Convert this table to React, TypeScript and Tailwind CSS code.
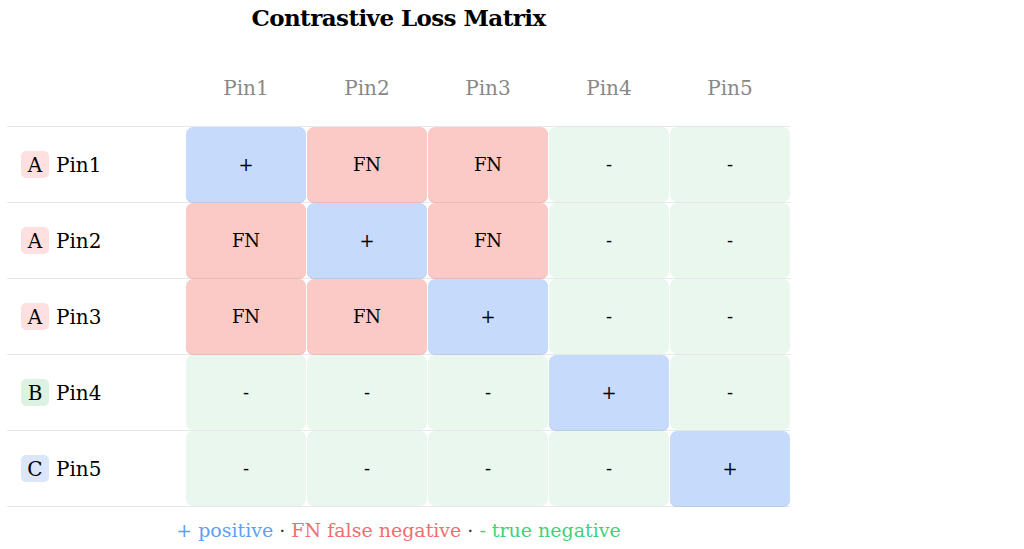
const cols = ['Pin1', 'Pin2', 'Pin3', 'Pin4', 'Pin5']

type Kind = 'pos' | 'fn' | 'neg'

const rows: { group: string; name: string; cells: Kind[] }[] = [
  { group: 'A', name: 'Pin1', cells: ['pos', 'fn', 'fn', 'neg', 'neg'] },
  { group: 'A', name: 'Pin2', cells: ['fn', 'pos', 'fn', 'neg', 'neg'] },
  { group: 'A', name: 'Pin3', cells: ['fn', 'fn', 'pos', 'neg', 'neg'] },
  { group: 'B', name: 'Pin4', cells: ['neg', 'neg', 'neg', 'pos', 'neg'] },
  { group: 'C', name: 'Pin5', cells: ['neg', 'neg', 'neg', 'neg', 'pos'] },
]

const badgeColor: Record<string, string> = {
  A: 'bg-[#fde0df]',
  B: 'bg-[#dcf3e3]',
  C: 'bg-[#dbe6fb]',
}

const cellStyle: Record<Kind, string> = {
  pos: 'bg-[#c6dafc] rounded-[7px] shadow-[0_1px_0_#b9cbe9]',
  fn: 'bg-[#fbc9c6] rounded-[7px] shadow-[0_1px_0_#ecbab7]',
  neg: 'bg-[#eaf7ee] rounded-[7px]',
}

const cellText: Record<Kind, string> = { pos: '+', fn: 'FN', neg: '-' }

export default function App() {
  return (
    <div className="w-[783px] ml-[7px] font-['DejaVu_Serif',serif] text-black">
      <div className="h-[37px] flex items-center justify-center">
        <h1 className="text-[23px] font-bold tracking-tight">Contrastive Loss Matrix</h1>
      </div>

      <div className="grid grid-cols-[178px_repeat(5,120px)] gap-x-px h-[90px] items-center pt-[12px] border-b border-[#e5e7eb]">
        <div />
        {cols.map((c) => (
          <div key={c} className="text-center text-[20px] text-[#888888]">{c}</div>
        ))}
      </div>

      {rows.map((r) => (
        <div key={r.name} className="grid grid-cols-[178px_repeat(5,120px)] gap-x-px h-[76px] border-b border-[#e5e7eb]">
          <div className="flex items-center gap-[7px] pl-[14px] text-[20px]">
            <span className={`w-[28px] h-[27px] rounded-[5px] flex items-center justify-center ${badgeColor[r.group]}`}>
              {r.group}
            </span>
            <span>{r.name}</span>
          </div>
          {r.cells.map((k, i) => (
            <div key={i} className={`flex items-center justify-center text-[18px] ${cellStyle[k]}`}>
              {cellText[k]}
            </div>
          ))}
        </div>
      ))}

      <div className="h-[46px] flex items-center justify-center gap-[6px] text-[19px]">
        <span className="text-[#5fa0f5]">+ positive</span>
        <span className="text-[#333]">·</span>
        <span className="text-[#f26d6d]">FN false negative</span>
        <span className="text-[#333]">·</span>
        <span className="text-[#3fd17a]">- true negative</span>
      </div>
    </div>
  )
}
